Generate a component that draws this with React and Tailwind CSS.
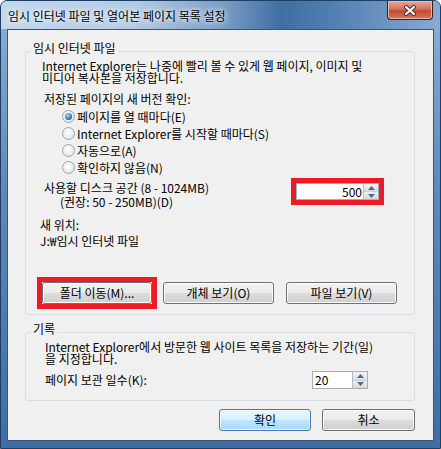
import React from "react";

function Radio({ checked, label }) {
  return (
    <div className="flex h-[17px] items-center">
      <span className="ml-[36px] flex h-[13px] w-[13px] items-center justify-center rounded-full border border-[#9ba5b0] bg-[radial-gradient(circle_at_45%_40%,#ffffff,#e6e7e9_70%,#d4d6d9)]">
        {checked && (
          <span className="h-[7px] w-[7px] rounded-full bg-[radial-gradient(circle_at_40%_35%,#a9ddff,#2a7fd0_55%,#0c4a8a)]" />
        )}
      </span>
      <span className="ml-[2px]">{label}</span>
    </div>
  );
}

function Arrows() {
  return (
    <div className="flex h-full w-[15px] flex-col border-l border-[#b4bcc7]">
      <div className="flex flex-1 items-center justify-center border-b border-[#c9cfd6] bg-[linear-gradient(#f4f4f4,#dedede)]">
        <svg width="7" height="4" viewBox="0 0 7 4">
          <path d="M0 4 L3.5 0 L7 4 Z" fill="#4d6a94" />
        </svg>
      </div>
      <div className="flex flex-1 items-center justify-center bg-[linear-gradient(#f0f0f0,#d8d8d8)]">
        <svg width="7" height="4" viewBox="0 0 7 4">
          <path d="M0 0 L7 0 L3.5 4 Z" fill="#4d6a94" />
        </svg>
      </div>
    </div>
  );
}

function Group({ title, className, children }) {
  return (
    <div className={`relative rounded-[3px] border border-[#d5dfe5] ${className}`}>
      <span className="absolute left-[5px] top-[-10px] bg-[#f0f0f0] px-[2px] leading-[12px]">
        {title}
      </span>
      {children}
    </div>
  );
}

const btn =
  "h-[22px] rounded-[3px] border border-[#707070] bg-[linear-gradient(#f2f2f2_0%,#ebebeb_50%,#dddddd_50%,#cfcfcf_100%)] shadow-[inset_0_0_0_1px_#fcfcfc] text-[12px] leading-[12px] text-black";

export default function App() {
  return (
    <div className="relative h-[449px] w-[441px] overflow-hidden rounded-t-[7px] border border-[#1f3e66] bg-[linear-gradient(#8fb0d4,#5f8bbb_40%,#3e6ea4)] font-['Noto_Sans_CJK_KR',sans-serif] text-[12px] text-black">
      {/* title bar */}
      <div className="flex h-[28px] items-start justify-between bg-[linear-gradient(90deg,#c3d7ec_0%,#b2cbe5_30%,#7d9fc6_50%,#3f6ea3_64%,#5a86b8_80%,#89abd0_100%)]">
        <span className="ml-[7px] mt-[9px] leading-[12px] [text-shadow:0_0_8px_#ffffff,0_0_4px_#ffffff]">
          임시 인터넷 파일 및 열어본 페이지 목록 설정
        </span>
        <div className="mr-[7px] flex h-[19px] w-[46px] items-center justify-center rounded-b-[4px] border border-t-0 border-[#4a1a16] bg-[linear-gradient(#e9a99b_0%,#d4705e_45%,#c04a32_55%,#d8765a_100%)] shadow-[inset_0_0_0_1px_#f0b9ab]">
          <svg width="14" height="11" viewBox="0 0 14 11">
            <path d="M3 2 L11 9 M11 2 L3 9" stroke="#4a2a25" strokeWidth="4" strokeLinecap="round" />
            <path d="M3 2 L11 9 M11 2 L3 9" stroke="#ffffff" strokeWidth="2.2" strokeLinecap="round" />
          </svg>
        </div>
      </div>

      {/* client area */}
      <div className="ml-[6px] h-[412px] w-[427px] border border-[#40536b] bg-[#f0f0f0] pl-[17px] pr-[18px] pt-[21px]">
        <Group title="임시 인터넷 파일" className="h-[264px] w-[390px]">
          <div className="pl-[16px] pt-[8px] leading-[12px]">
            <div>Internet Explorer는 나중에 빨리 볼 수 있게 웹 페이지, 이미지 및</div>
            <div>미디어 복사본을 저장합니다.</div>
          </div>
          <div className="mt-[9px] pl-[18px] leading-[12px]">저장된 페이지의 새 버전 확인:</div>
          <div className="mt-[3px]">
            <Radio checked label="페이지를 열 때마다(E)" />
            <Radio label="Internet Explorer를 시작할 때마다(S)" />
            <Radio label="자동으로(A)" />
            <Radio label="확인하지 않음(N)" />
          </div>
          <div className="mt-[2px] flex items-start justify-between pr-[30px]">
            <div className="mt-[3px] pl-[18px] leading-[14px]">
              <div>사용할 디스크 공간 (8 - 1024MB)</div>
              <div className="pl-[16px]">(권장: 50 - 250MB)(D)</div>
            </div>
            <div className="border-[5px] border-[#ed1c24]">
              <div className="flex h-[17px] w-[83px] border border-[#8fb2d9] bg-white">
                <div className="flex-1 pr-[1px] text-right leading-[15px]">500</div>
                <Arrows />
              </div>
            </div>
          </div>
          <div className="mt-[8px] pl-[14px] leading-[16px]">
            <div>새 위치:</div>
            <div>J:₩임시 인터넷 파일</div>
          </div>
          <div className="mt-[28px] flex items-start pl-[11px]">
            <div className="border-[5px] border-[#ed1c24]">
              <button className={`${btn} block w-[110px]`}>폴더 이동(M)...</button>
            </div>
            <button className={`${btn} ml-[6px] mt-[5px] w-[111px]`}>개체 보기(O)</button>
            <button className={`${btn} ml-[12px] mt-[5px] w-[111px]`}>파일 보기(V)</button>
          </div>
        </Group>

        <Group title="기록" className="mt-[17px] h-[69px] w-[390px]">
          <div className="pl-[19px] pt-[8px] leading-[12px]">
            <div>Internet Explorer에서 방문한 웹 사이트 목록을 저장하는 기간(일)</div>
            <div>을 지정합니다.</div>
          </div>
          <div className="mt-[6px] flex h-[18px] items-center pl-[19px] pr-[46px]">
            <span className="leading-[12px]">페이지 보관 일수(K):</span>
            <div className="ml-auto flex h-[18px] w-[56px] border border-[#abadb3] bg-white">
              <div className="flex-1 pl-[2px] leading-[16px]">20</div>
              <Arrows />
            </div>
          </div>
        </Group>

        <div className="mt-[8px] flex justify-end">
          <button className="h-[22px] w-[92px] rounded-[3px] border border-[#3c7fb1] bg-[linear-gradient(#eaf6fd_0%,#d9f0fc_50%,#bee6fd_50%,#a7d9f5_100%)] shadow-[inset_0_0_0_1px_#f4fbff] text-[12px] leading-[12px] text-black">
            확인
          </button>
          <button className={`${btn} ml-[11px] w-[93px]`}>취소</button>
        </div>
      </div>
    </div>
  );
}
